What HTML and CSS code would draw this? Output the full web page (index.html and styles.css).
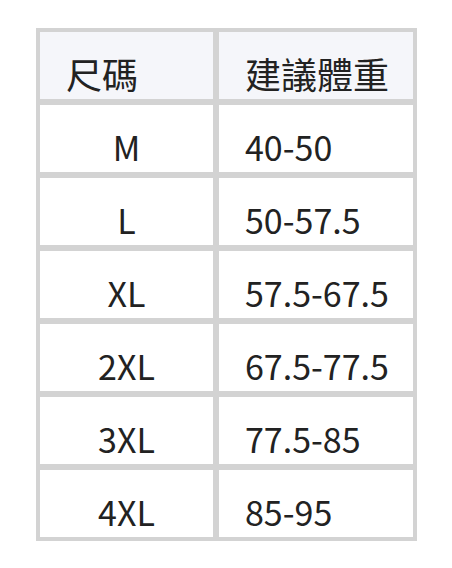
FILE: index.html
```html
<!DOCTYPE html>
<html lang="zh-Hant">
<head>
<meta charset="utf-8">
<link rel="stylesheet" href="styles.css">
</head>
<body>
<div class="size-table">
  <div class="cell head">尺碼</div>
  <div class="cell head">建議體重</div>
  <div class="cell size">M</div>
  <div class="cell weight">40-50</div>
  <div class="cell size">L</div>
  <div class="cell weight">50-57.5</div>
  <div class="cell size">XL</div>
  <div class="cell weight">57.5-67.5</div>
  <div class="cell size">2XL</div>
  <div class="cell weight">67.5-77.5</div>
  <div class="cell size">3XL</div>
  <div class="cell weight">77.5-85</div>
  <div class="cell size">4XL</div>
  <div class="cell weight">85-95</div>
</div>
</body>
</html>
```
FILE: styles.css
```css
html, body {
  margin: 0;
  padding: 0;
  background: #ffffff;
}
body {
  padding: 28px 0 0 36px;
  font-family: "Noto Sans CJK TC", "Noto Sans", sans-serif;
  color: #222222;
}
.size-table {
  display: grid;
  grid-template-columns: 173px 194px;
  grid-auto-rows: 67px;
  gap: 6px;
  padding: 4px;
  width: max-content;
  background: #d3d3d3;
}
.cell {
  background: #ffffff;
  font-size: 34px;
  line-height: 36px;
  padding: 24px 26px 0 26px;
  box-sizing: border-box;
  white-space: nowrap;
  font-weight: 400;
}
.head {
  background: #f5f6fa;
  font-size: 36px;
  padding-top: 23px;
}
.size {
  text-align: center;
  padding-left: 0;
  padding-right: 0;
}
```
